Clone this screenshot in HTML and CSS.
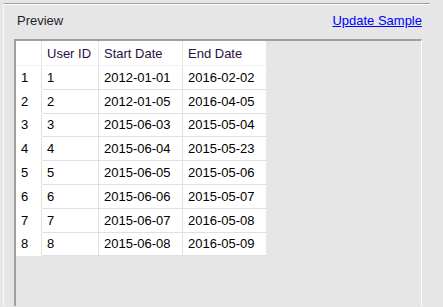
FILE: index.html
```html
<!DOCTYPE html>
<html lang="en">
<head>
    <meta charset="UTF-8">
    <title>Preview</title>
    <link rel="stylesheet" href="styles.css">
</head>
<body>
    <div class="group">
        <div class="group-head">
            <span class="label">Preview</span>
            <a href="#" class="link">Update Sample</a>
        </div>
        <div class="grid">
            <table>
                <thead>
                    <tr>
                        <th class="rownum"></th>
                        <th class="c-id">User ID</th>
                        <th class="c-date">Start Date</th>
                        <th class="c-date">End Date</th>
                    </tr>
                </thead>
                <tbody>
                    <tr><td class="rownum">1</td><td>1</td><td>2012-01-01</td><td>2016-02-02</td></tr>
                    <tr><td class="rownum">2</td><td>2</td><td>2012-01-05</td><td>2016-04-05</td></tr>
                    <tr><td class="rownum">3</td><td>3</td><td>2015-06-03</td><td>2015-05-04</td></tr>
                    <tr><td class="rownum">4</td><td>4</td><td>2015-06-04</td><td>2015-05-23</td></tr>
                    <tr><td class="rownum">5</td><td>5</td><td>2015-06-05</td><td>2015-05-06</td></tr>
                    <tr><td class="rownum">6</td><td>6</td><td>2015-06-06</td><td>2015-05-07</td></tr>
                    <tr><td class="rownum">7</td><td>7</td><td>2015-06-07</td><td>2016-05-08</td></tr>
                    <tr><td class="rownum">8</td><td>8</td><td>2015-06-08</td><td>2016-05-09</td></tr>
                </tbody>
            </table>
        </div>
    </div>
</body>
</html>
```

FILE: styles.css
```css
html, body {
    margin: 0;
    height: 100%;
    overflow: hidden;
}
body {
    background-color: #e6e6e6;
    font-family: "Liberation Sans", Arial, sans-serif;
    font-size: 13px;
    color: #000;
}
.group {
    margin: 3px 0 0 3px;
    width: 427px;
    height: 303px;
    box-sizing: border-box;
    border-top: 1px solid #a0a0a0;
    border-left: 1px solid #f8f8f8;
    box-shadow: inset 0 1px 0 #ffffff;
}
.group-head {
    display: flex;
    justify-content: space-between;
    align-items: center;
    height: 35px;
    padding: 0 8px 2px 13px;
    box-sizing: border-box;
}
.label {
    color: #1e1e1e;
}
.link {
    color: #0000ff;
    text-decoration: underline;
}
.grid {
    margin-left: 10px;
    width: 405px;
    height: 265px;
    border-top: 2px solid #a0a0a0;
    border-left: 2px solid #a0a0a0;
    border-right: 1px solid #ffffff;
}
table {
    border-collapse: collapse;
    background-color: #ffffff;
}
th, td {
    padding: 0 5px;
    text-align: left;
    font-weight: normal;
    white-space: nowrap;
}
th {
    height: 24px;
    color: #2a1240;
    border-left: 1px solid #e6e6e6;
    border-bottom: 1px solid #f0f0f0;
}
th.rownum {
    border-left: none;
}
td {
    height: 22.8px;
    border-left: 1px solid #e0e0e0;
    border-bottom: 1px solid #e0e0e0;
}
td.rownum {
    border-left: none;
    border-bottom: 1px solid #ffffff;
}
.rownum {
    width: 15px;
}
.c-id {
    width: 46px;
}
.c-date {
    width: 73px;
}
```
